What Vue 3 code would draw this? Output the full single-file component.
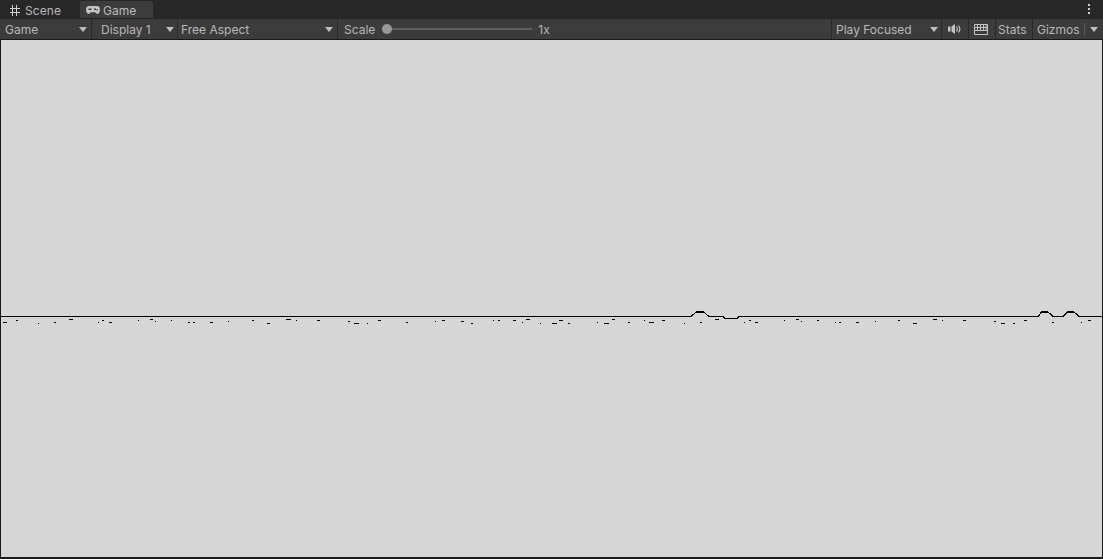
<template>
  <div class="editor">
    <div class="tabs">
      <div class="tab scene-tab">
        <svg class="tab-icon" width="10" height="11" viewBox="0 0 10 11">
          <path d="M2.500 0v11M6.500 0v11M0 3.500h10M0 7.500h10" stroke="#d0d0d0" stroke-width="1" fill="none" />
        </svg>
        <span>Scene</span>
      </div>
      <div class="tab game-tab">
        <svg class="tab-icon" width="14" height="10" viewBox="0 0 14 10">
          <path d="M3.500 1h7a3.400 3.400 0 0 1 3.400 3.600c0 2.400-.8 4.400-2.200 4.400-1.200 0-1.700-1.800-3-1.800H5.300C4 7.200 3.500 9 2.300 9 .9 9 .1 7 .1 4.600A3.400 3.400 0 0 1 3.500 1z" fill="#c4c4c4" />
          <rect x="2.500" y="3.500" width="3" height="1.500" fill="#3c3c3c" />
          <circle cx="9" cy="4.200" r="1" fill="#3c3c3c" />
          <circle cx="11" cy="4.800" r=".8" fill="#3c3c3c" />
        </svg>
        <span>Game</span>
      </div>
      <div class="kebab"><i></i><i></i><i></i></div>
    </div>

    <div class="toolbar">
      <div class="seg seg-game"><span>Game</span><b class="arrow"></b></div>
      <div class="seg seg-display"><span>Display 1</span><b class="arrow"></b></div>
      <div class="seg seg-aspect"><span>Free Aspect</span><b class="arrow"></b></div>
      <div class="seg seg-scale">
        <span>Scale</span>
        <div class="slider"><div class="thumb"></div></div>
        <span class="scale-value">1x</span>
      </div>
      <div class="seg seg-play"><span>Play Focused</span><b class="arrow"></b></div>
      <div class="seg seg-icon seg-audio">
        <svg width="13" height="10" viewBox="0 0 13 10">
          <path d="M0 2.500h2.500v5H0zM3.500 2.500L7 0v10L3.500 7.500z" fill="#c4c4c4" />
          <path d="M8.500 2.500c1 1.500 1 3.500 0 5M10.500 1.500c1.500 2 1.500 5 0 7" stroke="#c4c4c4" stroke-width="1.200" fill="none" />
        </svg>
      </div>
      <div class="seg seg-icon seg-keys">
        <svg width="14" height="11" viewBox="0 0 14 11">
          <path d="M.5.500h13v10H.5zM.5 3.500h13M.5 6.500h13M3.500.5v6M6.500.5v6M9.500.5v6M12 .5v6" stroke="#c4c4c4" stroke-width="1" fill="none" />
        </svg>
      </div>
      <div class="seg seg-stats"><span>Stats</span></div>
      <div class="seg seg-gizmos">
        <span>Gizmos</span>
        <em class="gizmo-sep"></em>
        <b class="arrow"></b>
      </div>
    </div>

    <div class="view">
      <svg class="horizon" width="1101" height="517" viewBox="0 40 1101 517" shape-rendering="crispEdges">
        <polyline :points="groundLine" fill="none" stroke="#000" stroke-width="1.400" />
        <rect v-for="(b, i) in bumpTops" :key="'b' + i" :x="b[0]" :y="b[2]" :width="b[1] - b[0]" height="2" fill="#000" />
        <rect v-for="(d, i) in dashes" :key="i" :x="d[0]" :y="d[2]" :width="d[1] - d[0]" height="1" fill="#000" />
      </svg>
    </div>
  </div>
</template>

<script setup>
const groundLine = [
  [0, 316.5], [690, 316.5], [692, 315], [694, 313], [696, 311.5], [702, 311.5], [704, 313], [706, 315], [708, 316.5],
  [722, 316.5], [724, 318.5], [736, 318.5], [738, 316.5],
  [1037, 316.5], [1039, 314], [1041, 311.5], [1046, 311.5], [1048, 313], [1052, 316.5],
  [1062, 316.5], [1065, 314], [1067, 311.5], [1072, 311.5], [1074, 313], [1078, 316.5], [1102, 316.5]
].map((p) => p.join(',')).join(' ')

// the bumps read thicker on top than the line itself
const bumpTops = [[695, 702, 311], [1041, 1047, 311], [1067, 1073, 311]]

// the little bits under the ground line: [from x, to x, y]
const dashes = [
  [2, 6, 322], [15, 17, 320], [37, 38, 323], [53, 55, 322], [68, 72, 319], [97, 98, 322], [101, 103, 320],
  [108, 111, 322], [137, 138, 320], [149, 152, 319], [154, 155, 321], [170, 171, 320], [187, 189, 322],
  [192, 194, 322], [209, 212, 322], [227, 228, 321], [251, 253, 320], [266, 269, 323], [285, 290, 319],
  [295, 296, 320], [316, 319, 320], [347, 349, 321], [353, 358, 323], [366, 367, 323], [377, 380, 320],
  [405, 407, 322], [434, 435, 321], [441, 444, 320], [460, 463, 321], [470, 472, 323], [492, 493, 320],
  [497, 499, 320], [512, 515, 320], [521, 522, 322], [525, 529, 319], [539, 540, 323], [551, 556, 323],
  [558, 562, 320], [567, 569, 323], [596, 597, 322], [603, 608, 323], [611, 614, 319], [627, 629, 322],
  [643, 644, 320], [648, 653, 322], [661, 664, 320], [683, 684, 323], [699, 701, 322], [714, 718, 319],
  [743, 744, 322], [748, 750, 320], [754, 757, 322], [783, 784, 320], [795, 798, 319], [800, 801, 321],
  [816, 818, 320], [834, 835, 322], [838, 840, 322], [855, 858, 322], [874, 875, 321], [897, 899, 320],
  [912, 916, 323], [932, 936, 319], [941, 942, 320], [962, 965, 320], [993, 995, 321], [1000, 1004, 323],
  [1012, 1014, 323], [1023, 1026, 320], [1051, 1053, 322], [1080, 1081, 322], [1087, 1090, 320]
]
</script>

<style scoped>
.editor {
  width: 1103px;
  height: 559px;
  display: flex;
  flex-direction: column;
  overflow: hidden;
  background: #191919;
  color: #b8b8b8;
  font-family: Inter, "Liberation Sans", sans-serif;
  font-size: 12px;
}

.tabs {
  height: 18px;
  display: flex;
  align-items: stretch;
  background: #282828;
  flex-shrink: 0;
}

.tab {
  display: flex;
  align-items: center;
  height: 17px;
  margin-top: 1px;
  padding-top: 1px;
  box-sizing: border-box;
}

.scene-tab {
  width: 78px;
  padding-left: 9px;
  margin-left: 1px;
  gap: 5px;
  letter-spacing: 0.1px;
}

.game-tab {
  width: 73px;
  margin-left: 1px;
  padding-left: 6px;
  gap: 3px;
  background: #3c3c3c;
  border-radius: 3px 3px 0 0;
  color: #bdbdbd;
}

.kebab {
  margin-left: auto;
  width: 28px;
  display: flex;
  flex-direction: column;
  align-items: center;
  justify-content: center;
  gap: 2px;
}

.kebab i {
  width: 2px;
  height: 2px;
  background: #d0d0d0;
}

.toolbar {
  height: 20px;
  margin-bottom: 1px;
  display: flex;
  align-items: stretch;
  background: #3c3c3c;
  flex-shrink: 0;
  border-top: 1px solid #232323;
  box-sizing: content-box;
}

.seg {
  display: flex;
  align-items: center;
  box-sizing: border-box;
  border-right: 1px solid #2a2a2a;
  white-space: nowrap;
}

.arrow {
  margin-left: auto;
  width: 0;
  height: 0;
  border-left: 4px solid transparent;
  border-right: 4px solid transparent;
  border-top: 5px solid #bdbdbd;
}

.seg-game {
  width: 92px;
  padding: 0 4px 0 5px;
}

.seg-display {
  width: 86px;
  padding: 0 3px 0 9px;
}

.seg-aspect {
  width: 160px;
  padding: 0 4px 0 3px;
}

.seg-scale {
  width: 494px;
  padding-left: 6px;
}

.slider {
  width: 150px;
  height: 2px;
  margin-left: 7px;
  background: #5f5f5f;
}

.thumb {
  width: 10px;
  height: 10px;
  margin-top: -4px;
  border-radius: 50%;
  background: #999;
}

.scale-value {
  margin-left: 6px;
}

.seg-play {
  width: 110px;
  padding: 0 3px 0 4px;
}

.seg-icon {
  justify-content: center;
  width: 27px;
  padding-right: 2px;
}

.seg-stats {
  width: 37px;
  padding-left: 2px;
}

.seg-gizmos {
  flex: 1;
  border-right: 0;
  padding: 0 5px 0 4px;
}

.gizmo-sep {
  width: 1px;
  height: 12px;
  margin-left: 4px;
  background: #5a5a5a;
}

.view {
  height: 517px;
  margin: 0 1px;
  background: #d6d6d6;
  flex-shrink: 0;
}

.horizon {
  display: block;
}
</style>
